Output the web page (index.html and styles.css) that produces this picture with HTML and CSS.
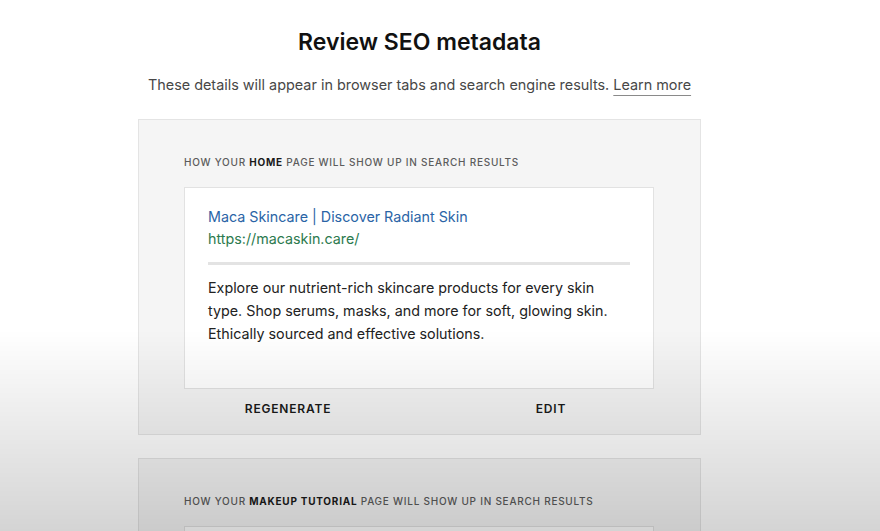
FILE: index.html
```html
<!DOCTYPE html>
<html lang="en">
<head>
<meta charset="utf-8">
<title>Review SEO metadata</title>
<link rel="stylesheet" href="styles.css">
</head>
<body>
<main class="page">
  <h1 class="title">Review SEO metadata</h1>
  <p class="subtitle">These details will appear in browser tabs and search engine results. <a class="learn" href="#">Learn more</a></p>

  <section class="card">
    <div class="label">HOW YOUR <b>HOME</b> PAGE WILL SHOW UP IN SEARCH RESULTS</div>
    <div class="preview">
      <div class="serp-title">Maca Skincare | Discover Radiant Skin</div>
      <div class="serp-url">https://macaskin.care/</div>
      <div class="divider"></div>
      <p class="serp-desc">Explore our nutrient-rich skincare products for every skin type. Shop serums, masks, and more for soft, glowing skin. Ethically sourced and effective solutions.</p>
    </div>
    <div class="actions">
      <button class="action">REGENERATE</button>
      <button class="action">EDIT</button>
    </div>
  </section>

  <section class="card">
    <div class="label">HOW YOUR <b>MAKEUP TUTORIAL</b> PAGE WILL SHOW UP IN SEARCH RESULTS</div>
    <div class="preview preview-empty"></div>
  </section>
</main>
<div class="shade"></div>
</body>
</html>
```
FILE: styles.css
```css
html, body {
  margin: 0;
  padding: 0;
  background: #ffffff;
  overflow: hidden;
  height: 531px;
}
body {
  font-family: "Inter", "Liberation Sans", sans-serif;
  color: #1f1f1f;
}
.page {
  width: 563px;
  margin-left: 138px;
  padding-top: 28px;
  display: flex;
  flex-direction: column;
}
.title {
  margin: 0;
  text-align: center;
  font-size: 23px;
  line-height: 28px;
  font-weight: 600;
  color: #111;
}
.subtitle {
  margin: 18px -40px 0;
  text-align: center;
  font-size: 14.4px;
  line-height: 22px;
  color: #474747;
}
.learn {
  color: #474747;
  text-decoration: underline;
  text-decoration-color: #8a8a8a;
  text-underline-offset: 5px;
  text-decoration-thickness: 1px;
}
.card {
  margin-top: 23px;
  background: #f5f5f5;
  border: 1px solid #e4e4e4;
  padding: 35px 46px 14px 45px;
}
.card + .card {
  margin-top: 23px;
}
.label {
  font-size: 10px;
  line-height: 14px;
  letter-spacing: 0.75px;
  color: #5c5c5c;
  font-weight: 500;
}
.label b {
  color: #1a1a1a;
  font-weight: 700;
}
.preview {
  margin-top: 18px;
  background: #ffffff;
  border: 1px solid #e2e2e2;
  padding: 18px 23px 43px;
}
.preview-empty {
  height: 120px;
}
.serp-title {
  font-size: 14.3px;
  line-height: 22px;
  color: #2a64a6;
}
.serp-url {
  font-size: 14.3px;
  line-height: 22px;
  color: #2c7a4e;
}
.divider {
  margin-top: 12px;
  height: 3px;
  background: #e3e3e3;
}
.serp-desc {
  margin: 11px 0 0;
  font-size: 14.3px;
  line-height: 23px;
  color: #222;
}
.actions {
  display: flex;
  justify-content: center;
  gap: 23px;
  margin: 9px -46px 0 -45px;
}
.action {
  width: 240px;
  border: 0;
  background: transparent;
  padding: 0;
  font-family: inherit;
  font-size: 12px;
  line-height: 22px;
  font-weight: 600;
  letter-spacing: 0.8px;
  color: #1a1a1a;
}
.shade {
  position: fixed;
  left: 0;
  right: 0;
  top: 0;
  height: 531px;
  pointer-events: none;
  background: linear-gradient(to bottom, rgba(0,0,0,0) 0, rgba(0,0,0,0) 330px, rgba(0,0,0,0.06) 400px, rgba(0,0,0,0.17) 531px);
}
```
